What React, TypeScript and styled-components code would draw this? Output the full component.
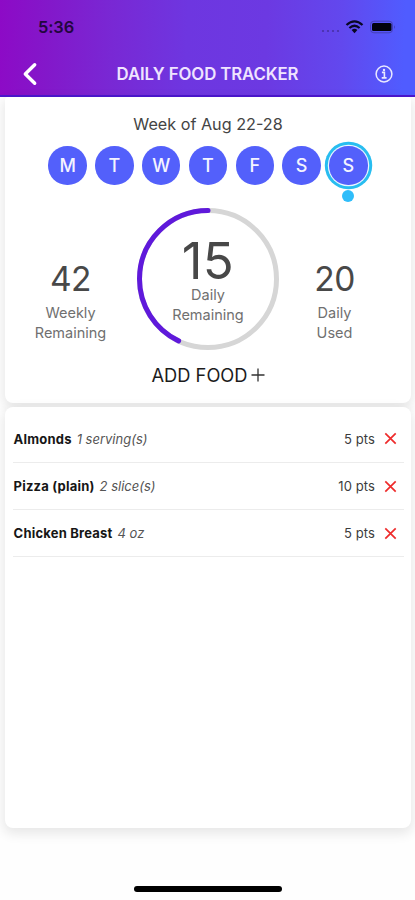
import React from "react";
import styled, { createGlobalStyle, css } from "styled-components";

const GlobalStyle = createGlobalStyle`
  * { box-sizing: border-box; }
  body {
    margin: 0;
    background: #fff;
    font-family: Inter, "Liberation Sans", sans-serif;
  }
`;

const Screen = styled.div`
  width: 415px;
  height: 900px;
  overflow: hidden;
  display: flex;
  flex-direction: column;
  background: #fefefe;
`;

const Header = styled.header`
  height: 97px;
  flex: none;
  background: linear-gradient(92deg, #8d0ac6 0%, #8318ca 12%, #7928d4 27%, #6e36e0 45%, #6c39e2 64%, #6248ee 82%, #505cff 97%);
  border-bottom: 2px solid #4c16cf;
`;

const StatusBar = styled.div`
  height: 54px;
  padding: 0 20px 0 38px;
  display: flex;
  align-items: center;
  justify-content: space-between;
`;

const Clock = styled.span`
  font-size: 16.4px;
  font-weight: 600;
  letter-spacing: -0.1px;
  color: #23063f;
`;

const StatusIcons = styled.div`
  display: flex;
  align-items: center;
`;

const NavBar = styled.nav`
  height: 40px;
  display: grid;
  grid-template-columns: 60px 1fr 60px;
  align-items: center;
`;

const IconButton = styled.button<{ $end?: boolean }>`
  border: 0;
  background: none;
  height: 40px;
  display: flex;
  align-items: center;
  padding: ${(p) => (p.$end ? "0 21px 0 0" : "0 0 0 21px")};
  justify-content: ${(p) => (p.$end ? "flex-end" : "flex-start")};
`;

const Title = styled.h1`
  margin: 0;
  font-size: 16.8px;
  font-weight: 600;
  letter-spacing: -0.1px;
  text-align: center;
  white-space: nowrap;
  color: #efe4ff;
`;

const Content = styled.main`
  display: flex;
  flex-direction: column;
  gap: 4px;
  padding: 0 4px 0 5px;
`;

const cardBase = css`
  background: #fff;
  box-shadow: 0 4px 12px 2px rgba(0, 0, 0, 0.09);
`;

const SummaryCard = styled.section`
  ${cardBase}
  height: 306px;
  border-radius: 3px 3px 8px 8px;
  display: flex;
  flex-direction: column;
  align-items: center;
`;

const FoodCard = styled.section`
  ${cardBase}
  position: relative;
  height: 421px;
  border-radius: 8px;
  padding: 8.6px 7px 0 8px;
`;

const WeekLabel = styled.div`
  margin-top: 15px;
  height: 24px;
  line-height: 24px;
  font-size: 16.2px;
  color: #444;
`;

const Days = styled.div`
  display: flex;
  gap: 8.4px;
  margin-top: 10.4px;
`;

const Day = styled.div<{ $active?: boolean }>`
  position: relative;
  width: 38.4px;
  height: 38.4px;
  border-radius: 50%;
  display: flex;
  align-items: center;
  justify-content: center;
  background: #5360fb;
  color: #f4f4ff;
  font-size: 18px;
  font-weight: 500;
  ${(p) =>
    p.$active &&
    css`
      box-shadow: 0 0 0 1.2px #eaf5ff, 0 0 0 4.2px #28bdf0;
      &::after {
        content: "";
        position: absolute;
        top: 44px;
        left: 13.2px;
        width: 12px;
        height: 12px;
        border-radius: 50%;
        background: #2fbdfa;
      }
    `}
`;

const Stats = styled.div`
  width: 100%;
  margin-top: 22.2px;
  height: 144px;
  display: grid;
  grid-template-columns: 131px 144px 109px;
`;

const Stat = styled.div`
  display: flex;
  flex-direction: column;
  align-items: center;
  padding-top: 53px;
`;

const StatValue = styled.div<{ $large?: boolean }>`
  font-size: ${(p) => (p.$large ? "51px" : "33.5px")};
  line-height: ${(p) => (p.$large ? "50px" : "38px")};
  letter-spacing: ${(p) => (p.$large ? "0.5px" : "-0.5px")};
  color: #484848;
`;

const StatLabel = styled.div<{ $large?: boolean }>`
  margin-top: ${(p) => (p.$large ? "-1px" : "5px")};
  font-size: 14.5px;
  line-height: 20.3px;
  text-align: center;
  color: #707070;
`;

const Ring = styled.div`
  display: grid;
  > * { grid-area: 1 / 1; }
`;

const RingText = styled.div`
  display: flex;
  flex-direction: column;
  align-items: center;
  padding-top: 29px;
`;

const AddFood = styled.button`
  margin-top: 10px;
  height: 28px;
  border: 0;
  padding: 0;
  background: none;
  display: flex;
  align-items: center;
  gap: 3px;
  font: 400 18.3px Inter, "Liberation Sans", sans-serif;
  color: #1c1c1c;
`;

const FoodRow = styled.div`
  height: 47.3px;
  display: flex;
  align-items: center;
  border-bottom: 1px solid #ececec;
  font-size: 13px;
  color: #3c3c3c;
`;

const FoodName = styled.span`
  margin-left: 0.6px;
  font-weight: 700;
  letter-spacing: 0.2px;
  color: #161616;
`;

const Amount = styled.span`
  flex: 1;
  margin-left: 5px;
  font-style: italic;
  color: #555;
`;

const Points = styled.span`
  margin-right: 9px;
  letter-spacing: 0.1px;
`;

const RemoveIcon = styled.svg`
  margin-right: 7px;
`;

const HomeBar = styled.div`
  width: 148px;
  height: 6px;
  margin: auto auto 8px 134px;
  flex: none;
  border-radius: 3px;
  background: #000;
`;

const days = ["M", "T", "W", "T", "F", "S", "S"];

const foods = [
  { name: "Almonds", amount: "1 serving(s)", points: 5 },
  { name: "Pizza (plain)", amount: "2 slice(s)", points: 10 },
  { name: "Chicken Breast", amount: "4 oz", points: 5 },
];

const RADIUS = 68.5;
const LENGTH = 2 * Math.PI * RADIUS;

function ProgressRing({ value }: { value: number }) {
  return (
    <svg width="144" height="144" viewBox="0 0 144 144" fill="none" strokeWidth="5">
      <circle cx="72" cy="72" r={RADIUS} stroke="#d6d6d6" />
      <circle
        cx="72"
        cy="72"
        r={RADIUS}
        stroke="#5f19db"
        strokeLinecap="round"
        strokeDasharray={`${LENGTH * value} ${LENGTH}`}
        transform="translate(144 0) scale(-1 1) rotate(-90 72 72)"
      />
    </svg>
  );
}

function StatusGlyphs() {
  return (
    <StatusIcons>
      <svg width="76" height="16" viewBox="0 0 76 16" fill="none">
        <g fill="#4830a5">
          <circle cx="4" cy="12" r="1.1" />
          <circle cx="9" cy="12" r="1.1" />
          <circle cx="14" cy="12" r="1.1" />
          <circle cx="19" cy="12" r="1.1" />
        </g>
        <g stroke="#090723" strokeWidth="2.3">
          <path d="M27.5 6Q35.5 -1.2 43.5 6" />
          <path d="M30.4 9Q35.5 4.6 40.6 9" />
        </g>
        <path d="M32.6 11.1Q35.5 8.6 38.4 11.1L35.5 14.2Z" fill="#090723" />
        <rect x="51.5" y="2.2" width="22" height="11.6" rx="3.4" stroke="#4540b5" />
        <rect x="53" y="4" width="19.5" height="8" rx="1.5" fill="#02020c" />
        <path d="M75 6.2Q76.3 8 75 9.8Z" fill="#3934a8" />
      </svg>
    </StatusIcons>
  );
}

export default function App() {
  return (
    <>
      <GlobalStyle />
      <Screen>
        <Header>
          <StatusBar>
            <Clock>5:36</Clock>
            <StatusGlyphs />
          </StatusBar>
          <NavBar>
            <IconButton aria-label="Back">
              <svg width="18" height="24" viewBox="0 0 18 24" fill="none">
                <path d="M13.7 2.7L4.3 12L13.7 21.3" stroke="#fff" strokeWidth="3.4" strokeLinecap="round" strokeLinejoin="round" />
              </svg>
            </IconButton>
            <Title>DAILY FOOD TRACKER</Title>
            <IconButton $end aria-label="Information">
              <svg width="20" height="20" viewBox="0 0 20 20" fill="none" stroke="#e9e9ff">
                <circle cx="10" cy="10" r="7.9" strokeWidth="1.5" />
                <path d="M7.9 8.4H10.4V13.7M7.7 13.9H12.6" strokeWidth="1.6" />
                <circle cx="10" cy="5.9" r="1.2" fill="#e9e9ff" stroke="none" />
              </svg>
            </IconButton>
          </NavBar>
        </Header>
        <Content>
          <SummaryCard>
            <WeekLabel>Week of Aug 22-28</WeekLabel>
            <Days>
              {days.map((day, i) => (
                <Day key={i} $active={i === 6}>{day}</Day>
              ))}
            </Days>
            <Stats>
              <Stat>
                <StatValue>42</StatValue>
                <StatLabel>Weekly<br />Remaining</StatLabel>
              </Stat>
              <Ring>
                <ProgressRing value={15 / 35} />
                <RingText>
                  <StatValue $large>15</StatValue>
                  <StatLabel $large>Daily<br />Remaining</StatLabel>
                </RingText>
              </Ring>
              <Stat>
                <StatValue>20</StatValue>
                <StatLabel>Daily<br />Used</StatLabel>
              </Stat>
            </Stats>
            <AddFood>
              ADD FOOD
              <svg width="14" height="14" viewBox="0 0 14 14" stroke="#333" strokeWidth="1.3">
                <path d="M7 0.5V13.5M0.5 7H13.5" />
              </svg>
            </AddFood>
          </SummaryCard>
          <FoodCard>
            {foods.map((food) => (
              <FoodRow key={food.name}>
                <FoodName>{food.name}</FoodName>
                <Amount>{food.amount}</Amount>
                <Points>{food.points} pts</Points>
                <RemoveIcon width="13" height="13" viewBox="0 0 13 13" stroke="#ee2b2b" strokeWidth="1.7">
                  <path d="M1.3 1.3L11.7 11.7M11.7 1.3L1.3 11.7" />
                </RemoveIcon>
              </FoodRow>
            ))}
          </FoodCard>
        </Content>
        <HomeBar />
      </Screen>
    </>
  );
}
